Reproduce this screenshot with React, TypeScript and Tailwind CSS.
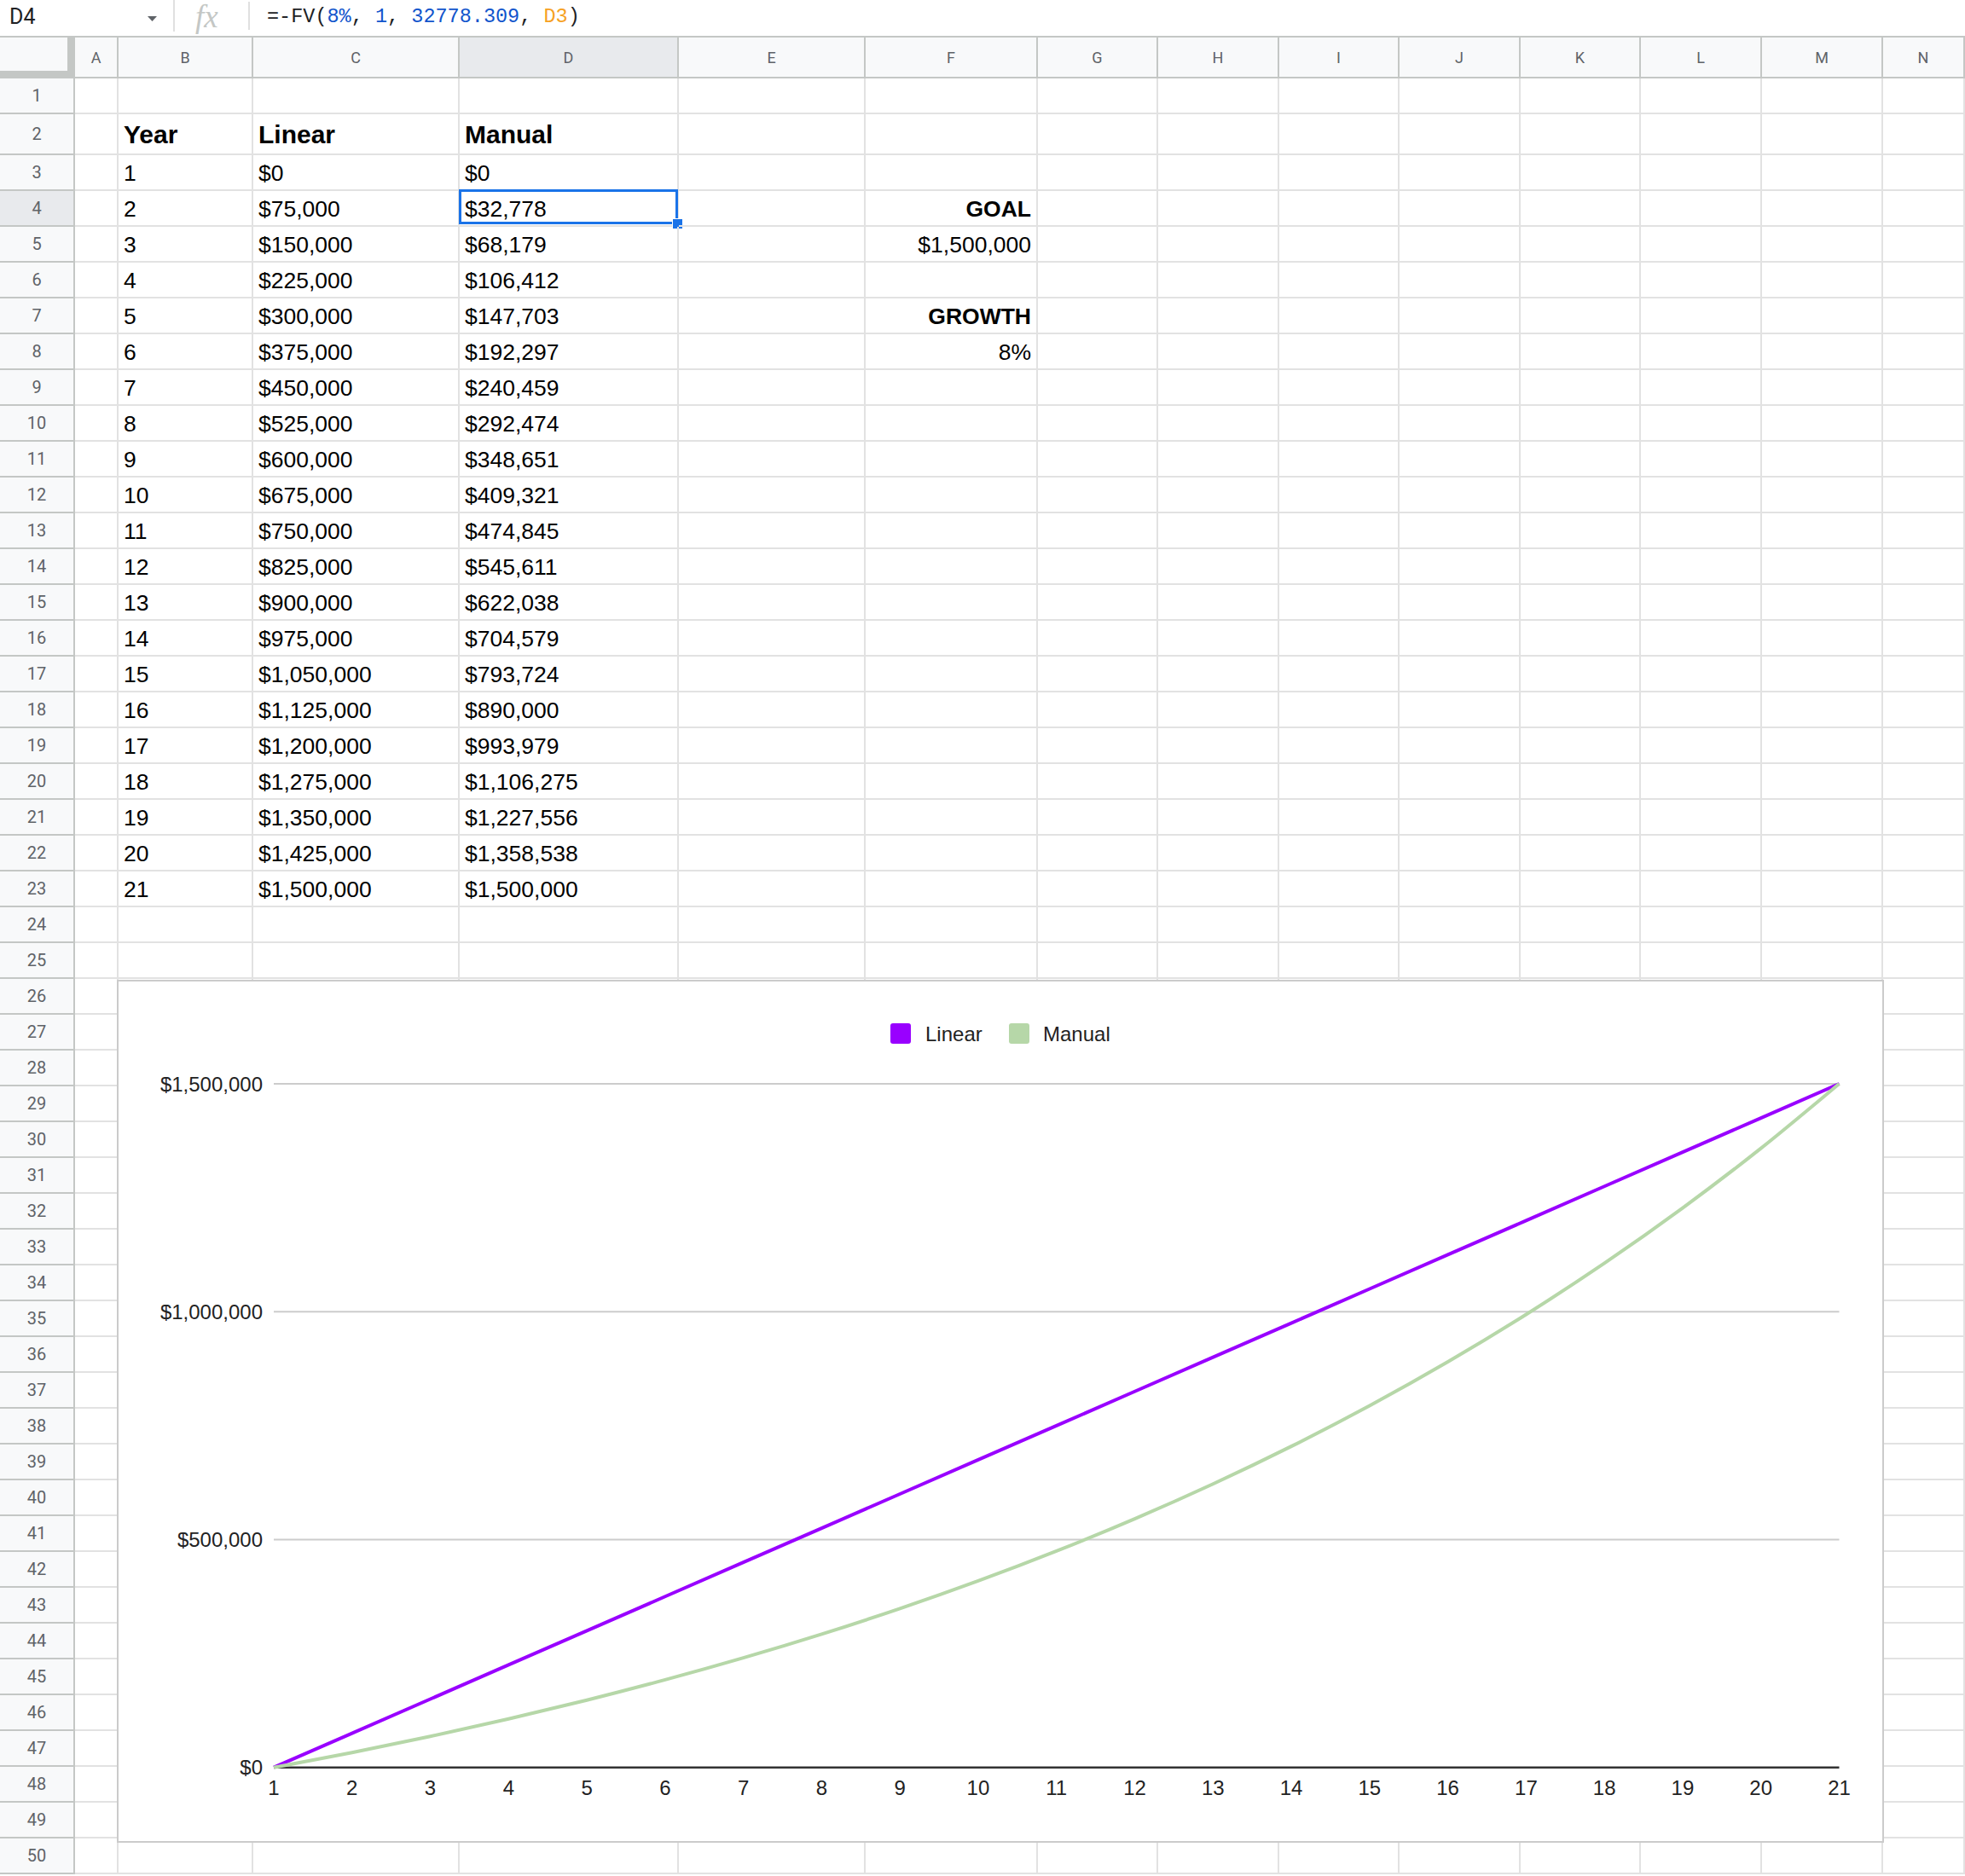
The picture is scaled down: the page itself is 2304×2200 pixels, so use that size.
import React from 'react';

const COLS: { k: string; w: string }[] = [
  { k: 'A', w: 'w-[51px]' },
  { k: 'B', w: 'w-[158px]' },
  { k: 'C', w: 'w-[242px]' },
  { k: 'D', w: 'w-[257px]' },
  { k: 'E', w: 'w-[219px]' },
  { k: 'F', w: 'w-[202px]' },
  { k: 'G', w: 'w-[141px]' },
  { k: 'H', w: 'w-[142px]' },
  { k: 'I', w: 'w-[141px]' },
  { k: 'J', w: 'w-[142px]' },
  { k: 'K', w: 'w-[141px]' },
  { k: 'L', w: 'w-[142px]' },
  { k: 'M', w: 'w-[142px]' },
  { k: 'N', w: 'w-[96px]' },
];

const MANUAL = [
  0, 32778, 68179, 106412, 147703, 192297, 240459, 292474, 348651, 409321, 474845,
  545611, 622038, 704579, 793724, 890000, 993979, 1106275, 1227556, 1358538, 1500000,
];

const fmt = (v: number) => '$' + v.toLocaleString('en-US');

type Cell = { text: string; bold?: boolean; right?: boolean; big?: boolean };

function getCell(row: number, col: string): Cell | null {
  if (row === 2) {
    if (col === 'B') return { text: 'Year', bold: true, big: true };
    if (col === 'C') return { text: 'Linear', bold: true, big: true };
    if (col === 'D') return { text: 'Manual', bold: true, big: true };
  }
  if (row >= 3 && row <= 23) {
    const i = row - 3;
    if (col === 'B') return { text: String(i + 1) };
    if (col === 'C') return { text: fmt(75000 * i) };
    if (col === 'D') return { text: fmt(MANUAL[i]) };
  }
  if (col === 'F') {
    if (row === 4) return { text: 'GOAL', bold: true, right: true };
    if (row === 5) return { text: '$1,500,000', right: true };
    if (row === 7) return { text: 'GROWTH', bold: true, right: true };
    if (row === 8) return { text: '8%', right: true };
  }
  return null;
}

function rowHeight(r: number) {
  if (r === 2) return 'h-[48px]';
  return 'h-[42px]';
}

function FormulaBar() {
  return (
    <div className="h-[44px] border-b-2 border-[#c4c7c5] bg-white flex items-stretch font-['Roboto',sans-serif]">
      <div className="w-[203px] shrink-0 flex items-center justify-between pl-[11px] pr-[19px] pb-[3px]">
        <span className="text-[25px] leading-none text-[#202124]">D4</span>
        <svg width="11" height="6" viewBox="0 0 11 6" className="mt-[4px]">
          <polygon points="0,0 11,0 5.5,6" fill="#5f6368" />
        </svg>
      </div>
      <div className="w-[2px] h-[37px] bg-[#e0e0e0] shrink-0" />
      <div className="w-[86px] shrink-0 flex items-start pl-[24px]">
        <span className="font-['Liberation_Serif',serif] italic text-[37px] leading-[40px] text-[#c4c7c5]">fx</span>
      </div>
      <div className="w-[2px] h-[33px] mt-[2px] bg-[#e0e0e0] shrink-0" />
      <div className="pl-[20px] flex items-center pb-[3px] font-['Liberation_Mono',monospace] text-[23.5px] text-[#202124] whitespace-pre">
        <span>=-FV(</span>
        <span className="text-[#1155cc]">8%</span>
        <span>, </span>
        <span className="text-[#1155cc]">1</span>
        <span>, </span>
        <span className="text-[#1155cc]">32778.309</span>
        <span>, </span>
        <span className="text-[#f6a123]">D3</span>
        <span>)</span>
      </div>
    </div>
  );
}

function ColumnHeader() {
  return (
    <div className="flex h-[48px] font-['Roboto',sans-serif]">
      <div className="w-[88px] shrink-0 h-full bg-[#f8f9fa] border-r-[9px] border-b-[9px] border-[#c4c7c5]" />
      {COLS.map((c) => (
        <div
          key={c.k}
          className={`${c.w} shrink-0 h-full border-r-2 border-b-2 border-[#c4c7c5] flex items-center justify-center text-[18px] text-[#5f6368] ${
            c.k === 'D' ? 'bg-[#e8eaed]' : 'bg-[#f8f9fa]'
          }`}
        >
          {c.k}
        </div>
      ))}
    </div>
  );
}

function Row({ r }: { r: number }) {
  return (
    <div className={`flex ${rowHeight(r)}`}>
      <div
        className={`w-[88px] shrink-0 h-full border-r-2 border-b-2 border-[#c4c7c5] flex items-center justify-center font-['Roboto',sans-serif] text-[20px] text-[#5f6368] ${
          r === 4 ? 'bg-[#e8eaed]' : 'bg-[#f8f9fa]'
        }`}
      >
        {r}
      </div>
      {COLS.map((c) => {
        const cell = getCell(r, c.k);
        const sel = r === 4 && c.k === 'D';
        return (
          <div
            key={c.k}
            className={`${c.w} shrink-0 h-full border-r-2 border-b-2 border-[#e2e2e2] flex items-end leading-none whitespace-nowrap text-black font-['Liberation_Sans',Arial,sans-serif] relative ${
              cell?.right ? 'justify-end pr-[6px]' : 'pl-[6px]'
            } ${cell?.big ? 'text-[30px] pb-[7px]' : 'text-[26.5px] pb-[6px]'} ${cell?.bold ? 'font-bold' : ''}`}
          >
            {cell ? <span>{cell.text}</span> : null}
            {sel ? (
              <>
                <div className="absolute left-[-1px] top-[-2px] right-[-1px] bottom-[1px] border-[3px] border-[#1a73e8]" />
                <div className="absolute right-[-7px] bottom-[-5px] w-[13px] h-[13px] bg-[#1a73e8] border border-white" />
              </>
            ) : null}
          </div>
        );
      })}
    </div>
  );
}

function Chart() {
  const X0 = 321;
  const X1 = 2156.5;
  const Y0 = 2072.7;
  const Y1 = 1271;
  const xs = (i: number) => X0 + (i * (X1 - X0)) / 20;
  const ys = (v: number) => Y0 - (v / 1500000) * (Y0 - Y1);
  const linear = Array.from({ length: 21 }, (_, i) => `${xs(i)},${ys(75000 * i)}`).join(' ');
  const pts = MANUAL.map((v, i) => [xs(i), ys(v)]);
  let d = `M ${pts[0][0]} ${pts[0][1]}`;
  for (let i = 0; i < pts.length - 1; i++) {
    const p0 = pts[Math.max(0, i - 1)];
    const p1 = pts[i];
    const p2 = pts[i + 1];
    const p3 = pts[Math.min(pts.length - 1, i + 2)];
    const c1x = p1[0] + (p2[0] - p0[0]) / 6;
    const c1y = p1[1] + (p2[1] - p0[1]) / 6;
    const c2x = p2[0] - (p3[0] - p1[0]) / 6;
    const c2y = p2[1] - (p3[1] - p1[1]) / 6;
    d += ` C ${c1x} ${c1y} ${c2x} ${c2y} ${p2[0]} ${p2[1]}`;
  }
  const grid = [
    { v: 1500000, t: '$1,500,000' },
    { v: 1000000, t: '$1,000,000' },
    { v: 500000, t: '$500,000' },
    { v: 0, t: '$0' },
  ];
  return (
    <svg
      className="absolute left-[137px] top-[1149px]"
      width={2072}
      height={1012}
      viewBox="137 1149 2072 1012"
      fontFamily="'Liberation Sans', Arial, sans-serif"
    >
      <rect x={138} y={1150} width={2070} height={1010} fill="#ffffff" stroke="#cbcbcb" strokeWidth={2} />
      <rect x={1044} y={1200} width={24} height={24} rx={3} fill="#9900ff" />
      <text x={1085} y={1221} fontSize={24} fill="#222222">Linear</text>
      <rect x={1183} y={1200} width={24} height={24} rx={3} fill="#b6d7a8" />
      <text x={1223} y={1221} fontSize={24} fill="#222222">Manual</text>
      {grid.map((g) => (
        <g key={g.t}>
          {g.v !== 0 ? (
            <line x1={X0} x2={X1} y1={ys(g.v)} y2={ys(g.v)} stroke="#cccccc" strokeWidth={2} />
          ) : null}
          <text x={308} y={ys(g.v) + 8.5} fontSize={24} fill="#222222" textAnchor="end">
            {g.t}
          </text>
        </g>
      ))}
      <line x1={X0} x2={X1} y1={Y0} y2={Y0} stroke="#333333" strokeWidth={2.5} />
      {Array.from({ length: 21 }, (_, i) => (
        <text key={i} x={xs(i)} y={2105} fontSize={24} fill="#222222" textAnchor="middle">
          {i + 1}
        </text>
      ))}
      <polyline points={linear} fill="none" stroke="#9900ff" strokeWidth={4} strokeLinejoin="round" />
      <path d={d} fill="none" stroke="#b6d7a8" strokeWidth={4} strokeLinejoin="round" />
    </svg>
  );
}

export default function App() {
  const rows = Array.from({ length: 50 }, (_, i) => i + 1);
  return (
    <div className="relative w-[2304px] h-[2200px] overflow-hidden bg-white">
      <FormulaBar />
      <ColumnHeader />
      {rows.map((r) => (
        <Row key={r} r={r} />
      ))}
      <Chart />
    </div>
  );
}
